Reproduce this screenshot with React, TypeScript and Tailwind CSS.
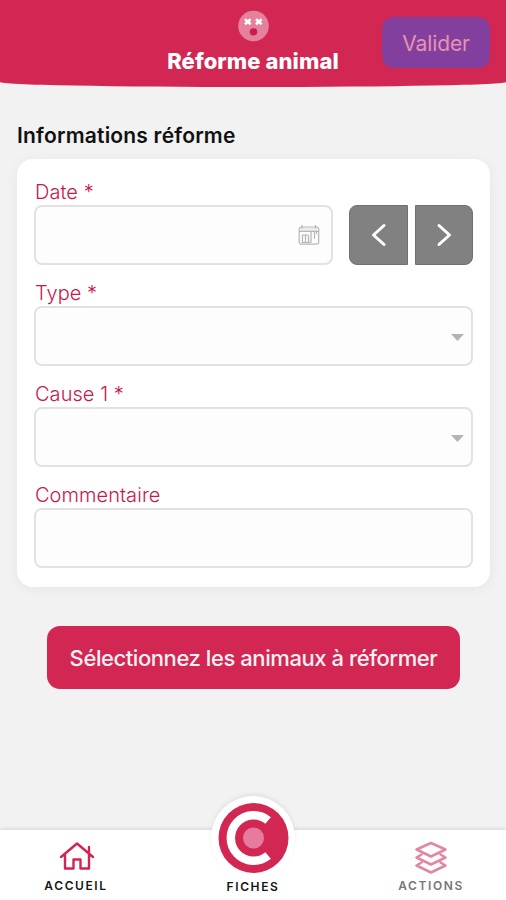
import type { ReactNode } from 'react';

const boxClass = 'h-[60px] rounded-lg border-2 border-[#e2e2e2] bg-[#fdfdfd]';

function Label({ children }: { children: ReactNode }) {
  return <div className="h-[26px] pl-px text-[20px] leading-[26px] font-light tracking-[0.05px] whitespace-nowrap text-[#c8184c]">{children}</div>;
}

function FaceIcon() {
  return (
    <svg width="32" height="32" viewBox="0 0 32 32" className="block">
      <circle cx="16.500" cy="16" r="15.3" fill="#e5809d" />
      <path d="M8 9.200l5.600 5m0-5l-5.600 5M19 9.200l5.600 5m0-5l-5.600 5" stroke="#fff" strokeWidth="2.5" />
      <ellipse cx="16.500" cy="21.8" rx="3.8" ry="3.6" fill="#cc1a4c" />
    </svg>
  );
}

function CalendarIcon() {
  return (
    <svg width="22" height="22" viewBox="0 0 22 22" fill="none" stroke="#b5b5b5" strokeWidth="1.2">
      <path d="M2.500 3.500h16.500v3.500h-16.500z" fill="#ececec" stroke="none" />
      <rect x="1.2" y="3" width="19.5" height="17.2" rx="2.2" />
      <path d="M1.2 7.300h19.500M4 1v3.500M17.500 1v3.500M4.500 11v7.500M7.500 11.500v7M10.500 11.500v7M13 7.500v11M16.500 8v7M18.500 8v2M4 11h6.500M3.500 18.500h9.500" />
    </svg>
  );
}

function Chevron({ left }: { left?: boolean }) {
  return (
    <svg width="16" height="24" viewBox="0 0 16 24" fill="none" stroke="#fff" strokeWidth="3" strokeLinecap="round" strokeLinejoin="round">
      <path d={left ? 'M13 2.500L2.500 12l10.500 9.500' : 'M3 2.500L13.500 12 3 21.500'} />
    </svg>
  );
}

function Select() {
  return (
    <div className={`${boxClass} flex items-center justify-end pt-[2px] pr-[7px]`}>
      <svg width="13" height="7" viewBox="0 0 13 7"><path d="M0 0h13L6.5 7z" fill="#b3b3b3" /></svg>
    </div>
  );
}

export default function App() {
  return (
    <div className="flex h-[900px] w-[506px] flex-col overflow-hidden bg-[#f2f2f2] font-['Inter',sans-serif]">
      <header className="grid h-[87px] shrink-0 grid-cols-[1fr_174px_1fr] bg-[#d22653] [border-bottom-left-radius:50%_5px] [border-bottom-right-radius:50%_5px]">
        <div />
        <div className="flex flex-col items-center pt-[10px]">
          <FaceIcon />
          <h1 className="mt-[5px] text-[22px] leading-[28px] font-extrabold tracking-[0.1px] whitespace-nowrap text-white">Réforme animal</h1>
        </div>
        <div className="flex justify-end pt-[17px] pr-4">
          <button className="h-[51px] w-[108px] rounded-xl bg-[#833f9d] pt-[3px] text-[21px] tracking-[-0.1px] text-[#e692b3]">Valider</button>
        </div>
      </header>

      <main className="flex flex-1 flex-col">
        <h2 className="mt-[34px] ml-[17px] pt-px text-[21px] leading-[27px] font-semibold tracking-[0.2px] whitespace-nowrap text-[#111]">Informations réforme</h2>
        <section className="mt-[10px] mr-4 ml-[17px] h-[428px] rounded-2xl bg-white px-[17px] pt-5 shadow-[0_2px_14px_rgba(0,0,0,0.05)]">
          <div className="flex flex-col gap-[15px]">
            <div>
              <Label>Date *</Label>
              <div className="flex">
                <div className={`${boxClass} flex w-[299px] items-center justify-end pr-[11px]`}><CalendarIcon /></div>
                <button className="ml-4 flex h-[60px] w-[59px] items-center justify-center rounded-l-lg border border-[#717171] bg-[#818181]"><Chevron left /></button>
                <button className="ml-[7px] flex h-[60px] w-[58px] items-center justify-center rounded-r-lg border border-[#717171] bg-[#818181]"><Chevron /></button>
              </div>
            </div>
            <div><Label>Type *</Label><Select /></div>
            <div><Label>Cause 1 *</Label><Select /></div>
            <div><Label>Commentaire</Label><div className={boxClass} /></div>
          </div>
        </section>
        <button className="mt-[39px] ml-[47px] h-[63px] w-[413px] rounded-[13px] bg-[#d22653] pt-px text-[22px] font-medium tracking-[-0.43px] whitespace-nowrap text-[#fff0f4]">Sélectionnez les animaux à réformer</button>
      </main>

      <nav className="grid h-[70px] shrink-0 grid-cols-[152px_202px_152px] bg-white text-center text-[12px] leading-[16px] font-semibold tracking-[1.6px] text-[#151515] shadow-[0_-1px_4px_rgba(0,0,0,0.13)]">
        <div className="flex flex-col items-center pt-[11px]">
          <svg width="36" height="30" viewBox="0 0 36 30" fill="none" stroke="#d32451" strokeWidth="2.4" strokeLinecap="round" strokeLinejoin="round">
            <path d="M3 16L19 2.500 35 16M7 13.500V27.500h8.500V18.500h7V27.500h8.500V13.500M31 11.500V6" />
          </svg>
          <span className="mt-[7px]">ACCUEIL</span>
        </div>
        <div className="flex flex-col items-center">
          <div className="-mt-[34px] flex size-[84px] items-center justify-center rounded-full bg-white shadow-[0_-2px_4px_rgba(0,0,0,0.07)]">
            <svg width="71" height="70" viewBox="0 0 70 70">
              <circle cx="35" cy="35" r="35" fill="#d22653" />
              <path d="M49.600 17.600A22.700 22.700 0 1 0 49.600 52.400" stroke="#fff" strokeWidth="8.5" fill="none" />
              <circle cx="35" cy="35" r="10.500" fill="#e67b9e" />
            </svg>
          </div>
          <span className="-mt-px">FICHES</span>
        </div>
        <div className="flex flex-col items-center pt-[11px] text-[#777]">
          <svg width="34" height="34" viewBox="0 0 34 34" fill="none" stroke="#e187a2" strokeWidth="2.5" strokeLinejoin="round" strokeLinecap="round">
            <path d="M18 2l14.500 6.500L18 15.500 3.500 8.500z" />
            <path d="M8.500 13.500L3.500 16.500 18 23.500l14.500-7-5-3M8.500 21.500L3.500 24.500 18 31.500l14.500-7-5-3" />
          </svg>
          <span className="mt-[3px] ml-0.5">ACTIONS</span>
        </div>
      </nav>
    </div>
  );
}
